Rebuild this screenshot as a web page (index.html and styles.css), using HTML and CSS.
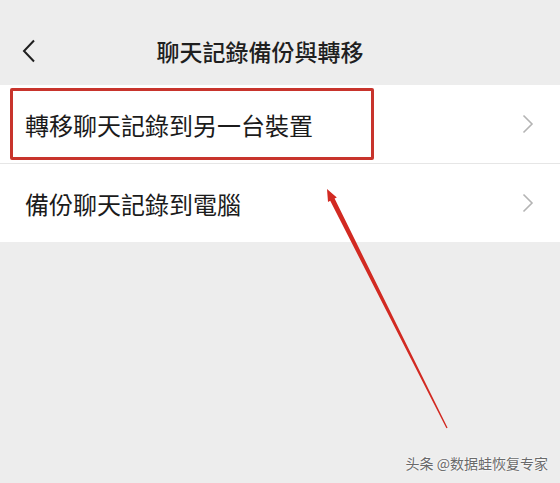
FILE: index.html
```html
<!DOCTYPE html>
<html lang="zh-Hant">
<head>
    <meta charset="UTF-8">
    <meta name="viewport" content="width=device-width, initial-scale=1.0">
    <title>聊天記錄備份與轉移</title>
    <link rel="stylesheet" href="styles.css">
</head>
<body>
    <div class="page">
        <header class="nav-bar">
            <span class="back-btn">
                <svg width="14" height="24" viewBox="0 0 14 24">
                    <path d="M12 1.5 L2 12 L12 22.5" fill="none" stroke="#1f1f1f" stroke-width="2"/>
                </svg>
            </span>
            <h1 class="nav-title">聊天記錄備份與轉移</h1>
        </header>

        <ul class="menu-list">
            <li class="menu-item">
                <span class="item-label">轉移聊天記錄到另一台裝置</span>
                <svg class="chevron" width="12" height="20" viewBox="0 0 12 20">
                    <path d="M1.5 1.5 L10 10 L1.5 18.5" fill="none" stroke="#b4b4b4" stroke-width="1.6"/>
                </svg>
            </li>
            <li class="menu-item">
                <span class="item-label">備份聊天記錄到電腦</span>
                <svg class="chevron" width="12" height="20" viewBox="0 0 12 20">
                    <path d="M1.5 1.5 L10 10 L1.5 18.5" fill="none" stroke="#b4b4b4" stroke-width="1.6"/>
                </svg>
            </li>
        </ul>

        <!-- annotation over the screenshot -->
        <div class="highlight-box"></div>
        <svg class="arrow" width="560" height="483" viewBox="0 0 560 483">
            <polygon points="447.6,427.7 334.6,198.6 336.8,197.5 327,189 328,201.9 330.2,200.8 446.4,428.3" fill="#d22a22"/>
        </svg>

        <div class="watermark">头条 @数据蛙恢复专家</div>
    </div>
</body>
</html>
```

FILE: styles.css
```css
* {
    box-sizing: border-box;
    margin: 0;
    padding: 0;
}

body {
    font-family: 'Noto Sans CJK TC', 'Noto Sans CJK SC', sans-serif;
    background: #ededed;
    color: #1b1b1b;
}

.page {
    position: relative;
    width: 560px;
    height: 483px;
    overflow: hidden;
}

.nav-bar {
    display: flex;
    align-items: center;
    height: 85px;
    padding-top: 16px;
    position: relative;
}

.back-btn {
    position: absolute;
    left: 22px;
    top: 39px;
    display: flex;
}

.nav-title {
    flex: 1;
    text-align: center;
    padding-right: 40px;
    font-size: 23px;
    font-weight: 500;
    letter-spacing: 0;
    color: #1f1f1f;
}

.menu-list {
    list-style: none;
    background: #fff;
}

.menu-item {
    display: flex;
    align-items: center;
    justify-content: space-between;
    height: 78px;
    padding: 0 26px 0 25px;
}

.menu-item + .menu-item {
    border-top: 1px solid #e6e6e6;
    height: 79px;
}

.item-label {
    font-size: 24px;
    color: #1b1b1b;
}

.highlight-box {
    position: absolute;
    left: 10px;
    top: 88px;
    width: 364px;
    height: 72px;
    border: 3px solid #c8342c;
    border-radius: 2px;
}

.arrow {
    position: absolute;
    left: 0;
    top: 0;
}

.watermark {
    position: absolute;
    right: 12px;
    bottom: 10px;
    font-size: 14px;
    color: #6a6a6a;
    text-shadow: 0 0 2px #fff, 0 0 2px #fff;
}
```
